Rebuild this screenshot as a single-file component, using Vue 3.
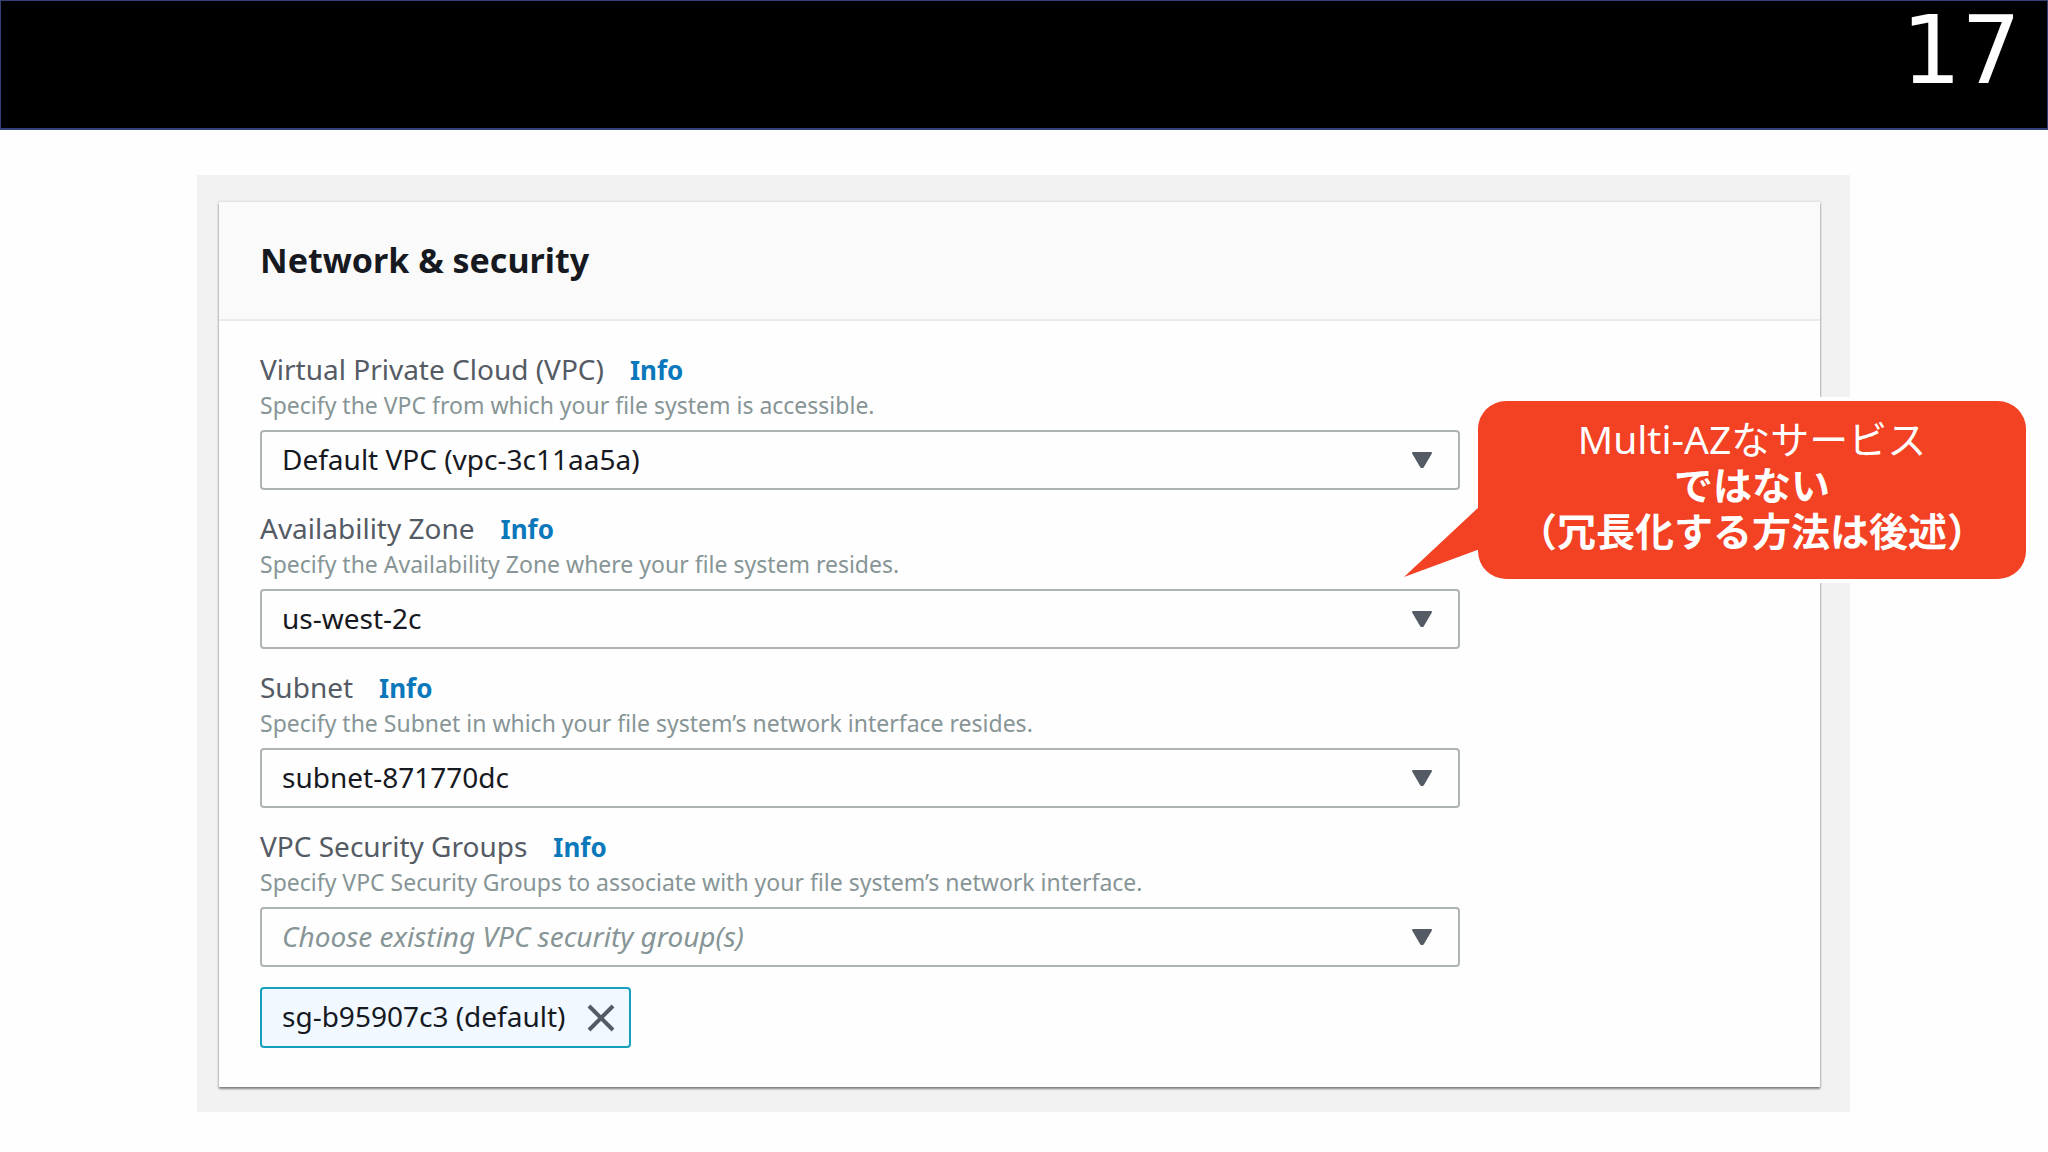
<template>
  <div class="slide">
    <header class="slide-bar">
      <span class="slide-number">17</span>
    </header>

    <main class="console">
      <section class="card">
        <div class="card-header">
          <h2>Network &amp; security</h2>
        </div>

        <form class="card-body" @submit.prevent>
          <div v-for="field in fields" :key="field.id" class="field">
            <div class="field-head">
              <label :for="field.id">{{ field.label }}</label>
              <a href="#" class="info" @click.prevent>Info</a>
            </div>
            <p :id="field.id + '-hint'" class="hint">{{ field.hint }}</p>
            <div class="select-wrap">
              <select
                :id="field.id"
                v-model="field.value"
                :class="{ placeholder: !field.value }"
                :aria-describedby="field.id + '-hint'"
              >
                <option v-if="field.placeholder" value="" disabled>{{ field.placeholder }}</option>
                <option v-for="option in field.options" :key="option" :value="option">{{ option }}</option>
              </select>
              <svg class="arrow" viewBox="0 0 22 16" aria-hidden="true">
                <path d="M2 1h18L11.8 15h-1.6z" />
              </svg>
            </div>
          </div>

          <!-- Selected security groups -->
          <ul class="tokens">
            <li v-for="group in groups" :key="group" class="token">
              <span>{{ group }}</span>
              <button type="button" :aria-label="'Remove ' + group" @click="removeGroup(group)">
                <svg viewBox="0 0 28 28" aria-hidden="true">
                  <path d="M2 2l24 24M26 2L2 26" />
                </svg>
              </button>
            </li>
          </ul>
        </form>
      </section>
    </main>

    <!-- Speech bubble pointing at the availability zone -->
    <aside class="callout">
      <svg class="tail" viewBox="0 0 76 72" aria-hidden="true">
        <path d="M76 0L0 71L76 43z" />
      </svg>
      <p>
        Multi-AZなサービス<br />
        <strong>ではない<br />（冗長化する方法は後述）</strong>
      </p>
    </aside>
  </div>
</template>

<script setup>
import { ref } from 'vue';

const fields = ref([
  {
    id: 'vpc',
    label: 'Virtual Private Cloud (VPC)',
    hint: 'Specify the VPC from which your file system is accessible.',
    value: 'Default VPC (vpc-3c11aa5a)',
    options: ['Default VPC (vpc-3c11aa5a)']
  },
  {
    id: 'zone',
    label: 'Availability Zone',
    hint: 'Specify the Availability Zone where your file system resides.',
    value: 'us-west-2c',
    options: ['us-west-2c']
  },
  {
    id: 'subnet',
    label: 'Subnet',
    hint: 'Specify the Subnet in which your file system’s network interface resides.',
    value: 'subnet-871770dc',
    options: ['subnet-871770dc']
  },
  {
    id: 'groups',
    label: 'VPC Security Groups',
    hint: 'Specify VPC Security Groups to associate with your file system’s network interface.',
    value: '',
    placeholder: 'Choose existing VPC security group(s)',
    options: []
  }
]);

const groups = ref(['sg-b95907c3 (default)']);

function removeGroup(group) {
  groups.value = groups.value.filter((item) => item !== group);
}
</script>

<style>
body {
  background: #fefefe;
}
</style>

<style scoped>
.slide {
  position: relative;
  font-family: "Noto Sans", "Open Sans", sans-serif;
  color: #16191f;
}

.slide * {
  box-sizing: border-box;
}

.slide-bar {
  display: flex;
  justify-content: flex-end;
  height: 130px;
  padding: 0 26px;
  background: #000;
  border: 1px solid #34407a;
  border-bottom-width: 2px;
}

.slide-number {
  font-family: "DejaVu Sans", sans-serif;
  font-size: 94px;
  line-height: 100px;
  color: #fff;
}

.console {
  margin: 45px 198px 40px 197px;
  padding: 27px 30px 25px 22px;
  background: #f2f2f3;
}

.card {
  background: #fefefe;
  box-shadow: 0 2px 2px rgba(0, 10, 20, 0.45), 0 0 2px 1px rgba(0, 28, 36, 0.1);
}

.card-header {
  display: flex;
  align-items: center;
  height: 119px;
  padding: 0 41px 2px;
  background: #fafafa;
  border-bottom: 2px solid #eaeaec;
}

h2 {
  margin: 0;
  font-size: 34px;
  line-height: 46px;
  font-weight: 700;
}

.card-body {
  padding: 29px 41px 39px;
}

.field {
  margin-bottom: 19px;
}

.field-head {
  display: flex;
  align-items: baseline;
  gap: 26px;
  height: 38px;
  font-size: 28px;
  line-height: 38px;
  color: #545b64;
}

.info {
  font-size: 26px;
  font-weight: 700;
  color: #0a78ba;
  text-decoration: none;
}

.hint {
  margin: 0 0 8px;
  font-size: 23px;
  line-height: 34px;
  color: #879596;
}

.select-wrap {
  position: relative;
  width: 79%;
}

select {
  display: block;
  width: 100%;
  height: 60px;
  padding: 0 70px 3px 20px;
  font: inherit;
  font-size: 28px;
  color: #16191f;
  background: #fefefe;
  border: 2px solid #aeb3b6;
  border-radius: 4px;
  appearance: none;
}

select.placeholder {
  font-style: italic;
  color: #879596;
}

.arrow {
  position: absolute;
  top: 22px;
  right: 27px;
  width: 22px;
  height: 16px;
  fill: #545b64;
  stroke: #545b64;
  stroke-width: 2;
  stroke-linejoin: round;
  pointer-events: none;
}

.tokens {
  display: flex;
  gap: 16px;
  margin: 20px 0 0;
  padding: 0;
  list-style: none;
}

.token {
  display: flex;
  align-items: center;
  gap: 22px;
  height: 61px;
  padding: 0 14px 0 20px;
  font-size: 28px;
  background: #f1f8ff;
  border: 2px solid #16a0be;
  border-radius: 4px;
}

.token span {
  padding-bottom: 4px;
}

.token button {
  display: flex;
  padding: 0;
  background: none;
  border: 0;
  cursor: pointer;
}

.token svg {
  width: 28px;
  height: 28px;
  stroke: #545b64;
  stroke-width: 4;
}

.callout {
  position: absolute;
  top: 401px;
  right: 22px;
  width: 548px;
  padding: 15px 20px 25px;
  font-family: "Noto Sans", "Noto Sans CJK JP", sans-serif;
  font-size: 39px;
  font-weight: 400;
  line-height: 46px;
  text-align: center;
  color: #fff;
  background: #f24123;
  border-radius: 28px;
  box-shadow: 0 0 0 4px #fefefe;
}

.callout p {
  margin: 0;
}

.callout strong {
  font-weight: 700;
}

.tail {
  position: absolute;
  top: 105px;
  left: -74px;
  width: 76px;
  height: 72px;
  fill: #f24123;
}
</style>
